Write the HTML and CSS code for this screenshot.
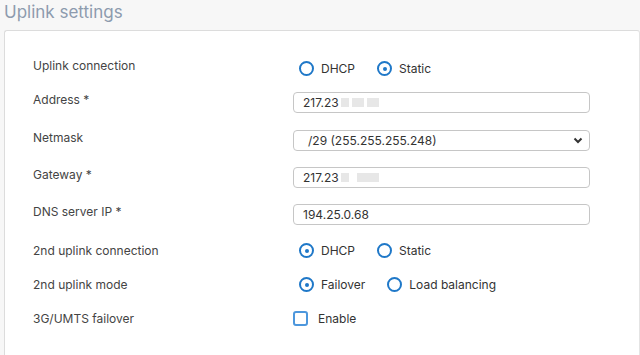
FILE: index.html
```html
<!DOCTYPE html>
<html lang="en">
<head>
  <meta charset="UTF-8" />
  <title>Uplink settings</title>
  <link rel="stylesheet" href="styles.css">
</head>
<body>

  <h1 class="title">Uplink settings</h1>

  <div class="panel">
    <div class="row row-first">
      <div class="label">Uplink connection</div>
      <div class="control">
        <label class="radio"><span class="dot"></span>DHCP</label>
        <label class="radio"><span class="dot on"></span>Static</label>
      </div>
    </div>

    <div class="row">
      <div class="label">Address *</div>
      <div class="control">
        <div class="field">217.23<span class="blur b1"></span><span class="blur b2"></span><span class="blur b3"></span></div>
      </div>
    </div>

    <div class="row row-mid">
      <div class="label">Netmask</div>
      <div class="control">
        <div class="field select">
          <span>/29 (255.255.255.248)</span>
          <svg width="10" height="7" viewBox="0 0 10 7"><path d="M1.5 1.5 L5 5 L8.5 1.5" fill="none" stroke="#333" stroke-width="2"/></svg>
        </div>
      </div>
    </div>

    <div class="row">
      <div class="label">Gateway *</div>
      <div class="control">
        <div class="field">217.23<span class="blur b1"></span><span class="blur b4"></span></div>
      </div>
    </div>

    <div class="row">
      <div class="label">DNS server IP *</div>
      <div class="control">
        <div class="field">194.25.0.68</div>
      </div>
    </div>

    <div class="row row-wide">
      <div class="label">2nd uplink connection</div>
      <div class="control">
        <label class="radio"><span class="dot on"></span>DHCP</label>
        <label class="radio"><span class="dot"></span>Static</label>
      </div>
    </div>

    <div class="row row-wide">
      <div class="label">2nd uplink mode</div>
      <div class="control">
        <label class="radio"><span class="dot on"></span>Failover</label>
        <label class="radio"><span class="dot"></span>Load balancing</label>
      </div>
    </div>

    <div class="row row-wide">
      <div class="label">3G/UMTS failover</div>
      <div class="control">
        <label class="check"><span class="box"></span>Enable</label>
      </div>
    </div>
  </div>

</body>
</html>
```

FILE: styles.css
```css
body {
  margin: 0;
  background: #f7f7f7;
  font-family: Inter, "Noto Sans", sans-serif;
  color: #333;
  font-size: 12px;
}

.title {
  margin: 0;
  padding: 0 0 0 4px;
  height: 30px;
  line-height: 24px;
  font-size: 17px;
  font-weight: 400;
  color: #8d9bae;
}

.panel {
  margin-left: 4px;
  background: #fff;
  border: 1px solid #dcdcdc;
  border-right-color: #e4e4e4;
  border-bottom: 0;
  border-radius: 3px 3px 0 0;
  padding: 0 0 0 28px;
  height: 325px;
  box-sizing: border-box;
  overflow: hidden;
}

.row {
  display: flex;
  align-items: flex-start;
  margin-top: 16px;
}

.row-first { margin-top: 30px; }
.row-first .label { margin-top: -3px; }
.row-mid { margin-top: 17px; }
.row-wide { margin-top: 18px; }

.label {
  width: 260px;
  flex-shrink: 0;
  color: #444;
  line-height: 16px;
}

.control {
  width: 297px;
  display: flex;
  align-items: center;
}

.field {
  width: 100%;
  height: 21px;
  border: 1px solid #c6c6c6;
  border-radius: 4px;
  box-sizing: border-box;
  padding: 0 9px;
  display: flex;
  align-items: center;
  color: #333;
}

.field.select {
  justify-content: space-between;
  padding-left: 14px;
  padding-right: 6px;
}

.blur {
  display: inline-block;
  height: 9px;
  background: #e3e3e3;
  margin-left: 2px;
  opacity: 0.85;
}
.b1 { width: 8px; }
.b2 { width: 12px; margin-left: 3px; }
.b3 { width: 12px; margin-left: 3px; }
.b4 { width: 22px; margin-left: 8px; }

.radio {
  display: flex;
  align-items: center;
  height: 15px;
  margin-left: 6px;
  margin-right: 16px;
}

.dot {
  width: 15px;
  height: 15px;
  border: 2px solid #1f78c8;
  border-radius: 50%;
  box-sizing: border-box;
  margin-right: 7px;
  position: relative;
}

.dot.on::after {
  content: "";
  position: absolute;
  left: 3.5px;
  top: 3.5px;
  width: 4px;
  height: 4px;
  border-radius: 50%;
  background: #1f78c8;
}

.check {
  display: flex;
  align-items: center;
  height: 15px;
}

.box {
  width: 15px;
  height: 15px;
  border: 2px solid #4d97dd;
  border-radius: 3px;
  box-sizing: border-box;
  margin-right: 10px;
}
```
